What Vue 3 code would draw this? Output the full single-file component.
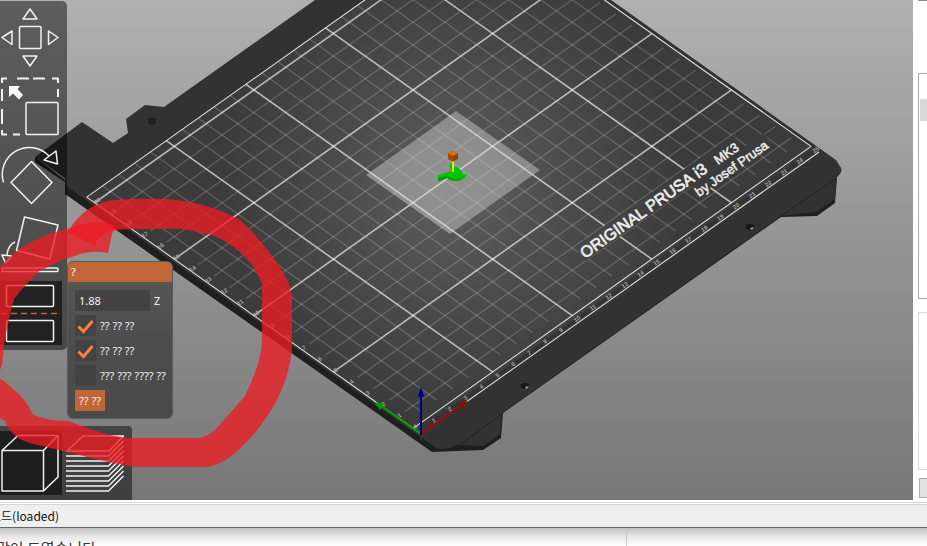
<script setup>
import { reactive, ref } from 'vue'

// Bed projection: 50 mm along each bed axis, measured from the bed origin.
const project = (u, v) => [421 + 79.6 * (u - v), 434 - 56.4 * (u + v)]
const segment = (u1, v1, u2, v2) => {
  const [x1, y1] = project(u1, v1)
  const [x2, y2] = project(u2, v2)
  return { x1, y1, x2, y2 }
}

const minor = []
const major = []
for (let k = 1; k < 25; k++) {
  if (k % 5) minor.push(segment(k / 5, 0.2, k / 5, 4.2))
  else major.push(segment(k / 5, 0.1, k / 5, 4.2))
}
for (let k = 1; k <= 20; k++) {
  if (k % 5) minor.push(segment(0.1, 0.1 + k / 5, 4.95, 0.1 + k / 5))
  else major.push(segment(0, 0.1 + k / 5, 5, 0.1 + k / 5))
}
const border = [
  segment(0, 0.1, 5, 0.1),
  segment(0, 0, 5, 0),
  segment(0, 0, 0, 4.2),
  segment(5, 0.1, 5, 4.2),
  segment(0, 4.2, 5, 4.2)
]

const ticks = []
for (let k = 1; k <= 25; k++) {
  const [x, y] = project(k / 5, 0.04)
  ticks.push({ id: 'x' + k, n: k, t: `translate(${x} ${y}) rotate(-35)` })
}
for (let k = 0; k <= 20; k++) {
  const [x, y] = project(0.03, 0.1 + k / 5)
  ticks.push({ id: 'y' + k, n: k, t: `translate(${x} ${y}) rotate(-35)` })
}

const layers = [456, 461, 466, 471, 476, 481, 486, 491]
const height = ref('1.88')
const options = reactive([
  { id: 'upper', label: '?? ?? ??', on: true },
  { id: 'lower', label: '?? ?? ??', on: true },
  { id: 'rotate', label: '??? ??? ???? ??', on: false }
])
</script>

<template>
  <div class="window">
    <main class="viewer">
      <svg class="scene" viewBox="0 0 913 500" preserveAspectRatio="xMinYMin slice">
        <defs>
          <radialGradient id="glow" gradientUnits="userSpaceOnUse" cx="453" cy="185" r="235">
            <stop offset="0" stop-color="#5f5f5f" />
            <stop offset=".5" stop-color="#4b4b4b" />
            <stop offset="1" stop-color="#3b3b3b" />
          </radialGradient>
          <mask id="print" maskUnits="userSpaceOnUse" x="0" y="-200" width="913" height="700">
            <rect x="0" y="-200" width="913" height="700" fill="#fff" />
            <g stroke="#000">
              <path d="M580 254L738 142" stroke-width="18" />
              <path d="M695 190L768 139" stroke-width="14" />
            </g>
          </mask>
        </defs>
        <path fill="#1f1f1f" d="M35 157L35 162L65 182L65 194L432 452L483 450L501 438L503 413L781 217L817 216L835 203L837 178L800 150L421 434L66 181Z" />
        <path fill="#323232" d="M315 0L164 107L145 105L126 119L128 133L113 143L82 122L35 157L65 178L66 186L436 448Q446 451 456 445L483 446L500 434L502 413L781 216L816 212L835 199L836 178Q843 172 841 168L836 160L611 0Z" />
        <path d="M454 449L503 413M781 216L837 178" stroke="#222" fill="none" />
        <path fill="url(#glow)" d="M421 434L819 152L605 0L367 0L87 197Z" />
        <path d="M420 440L819 157L813 149L421 428Z" fill="#343434" />
        <g mask="url(#print)" stroke="#fff" fill="none">
          <line v-for="(l, i) in minor" :key="'n' + i" v-bind="l" stroke-opacity=".17" stroke-width="1.4" />
          <line v-for="(l, i) in major" :key="'m' + i" v-bind="l" stroke-opacity=".64" stroke-width="1.6" />
        </g>
        <line v-for="(l, i) in border" :key="'b' + i" v-bind="l" stroke="#e2e2e2" stroke-width="1.1" />
        <text v-for="t in ticks" :key="t.id" class="tick" :transform="t.t" text-anchor="middle" dy="2">{{ t.n }}</text>
        <text class="brand large" transform="translate(585 259) rotate(-35.3)">ORIGINAL PRUSA i3</text>
        <text class="brand" transform="translate(718 165) rotate(-35.3)">MK3</text>
        <text class="brand" transform="translate(699 197) rotate(-35.3)">by Josef Prusa</text>

        <path d="M148 118h8v5l-2 2h-4l-2-2z" fill="#202020" />
        <g>
          <ellipse cx="750" cy="227" rx="4.5" ry="3" fill="#171717" />
          <path d="M750 228l4-1-1 2-2 1z" fill="#999" />
          <ellipse cx="525" cy="386" rx="4.5" ry="3" fill="#171717" />
          <path d="M525 387l4-1-1 2-2 1z" fill="#999" />
        </g>

        <path d="M456 111L540 170L450 234L366 175Z" fill="#d6d6d6" fill-opacity=".43" />
        <path d="M366 175L450 234L454 231L370 172Z" fill="#fff" fill-opacity=".05" />
        <path d="M438 175Q447 173 451 171L450 164Q451 162 453 166Q462 168 463 175Q466 175 467 173Q467 178 460 180Q452 182 447 178Q444 180 438 181Z" fill="#00c400" />
        <path d="M438 178Q448 174 453 179Q461 180 465 177Q461 181 455 181Q449 180 447 178Q443 181 438 181Z" fill="#009c00" />
        <path d="M453 161V172" stroke="#d9f000" stroke-width="2" />
        <path d="M453 151L458 153.500V159L453 161.500L448 159V153.500Z" fill="#8a3f00" />
        <path d="M453 151L458 153.500L453 156L448 153.500Z" fill="#df6d00" />
        <path d="M453 156V161.500L448 159V153.500Z" fill="#a34c00" />

        <g stroke-width="2" fill="none">
          <path d="M421 434L380 405" stroke="#00a000" />
          <path d="M421 434L462 405" stroke="#a00000" />
          <path d="M421 435V396" stroke="#000082" />
        </g>
        <path d="M374 402L380 410L384 404Z" fill="#00a000" />
        <path d="M468 401L459 403L463 408Z" fill="#a00000" />
        <path d="M421 387L424 396L421 398L418 396Z" fill="#000082" />
      </svg>

      <nav class="tools" aria-label="Object tools">
        <button type="button" class="tool" aria-label="Move">
          <svg viewBox="0 5 62 64"><path d="M30 9L37 19H23ZM30 66L37 56H23ZM2 37.500L12 31V44.500ZM58 37.500L48.500 31V44.500Z" /><rect x="19.500" y="26.500" width="21.500" height="22" rx="1" /></svg>
        </button>
        <button type="button" class="tool" aria-label="Scale">
          <svg viewBox="0 74 62 64"><path class="dash" d="M2 83V78.500H7M17 78.500H29M33 78.500H45M52 78.500H58V83M2 89V101M2 109V124M2 130V134.500H7M13 134.500H20M58 89V97" /><rect x="26" y="102.500" width="32" height="32" rx="1" /><path class="solid" d="M9 86H20L17.500 89L23 95L19 99.500L13 93.500L9 97Z" /></svg>
        </button>
        <button type="button" class="tool" aria-label="Rotate">
          <svg viewBox="0 143 62 64"><path d="M3.500 182.500A27 27 0 0 1 49 156M56 151L44 160L57.500 164ZM31.500 161.500L52 182.500L31.500 203.500L11 182.500Z" /></svg>
        </button>
        <button type="button" class="tool" aria-label="Place on face">
          <svg viewBox="0 212 62 64"><path d="M24.500 217L58 225L50 259L16.500 250.500ZM15 242Q8 245 7 255M2 255L12 256L5.500 263Z" /><rect x="2" y="268" width="56" height="3.500" rx="1" /></svg>
        </button>
        <button type="button" class="tool active" aria-label="Cut">
          <svg viewBox="0 281 62 64"><rect x="6.500" y="285.500" width="47" height="21" rx="1" /><rect x="6.500" y="320.500" width="47" height="21" rx="1" /><path class="cutline" d="M1 313.500H58" /></svg>
        </button>
      </nav>

      <form class="panel" @submit.prevent>
        <h1 class="title">?</h1>
        <div class="fields">
          <div class="row depth">
            <input id="cut-z" v-model="height" class="number" type="text" />
            <label for="cut-z">Z</label>
          </div>
          <div v-for="o in options" :key="o.id" class="row">
            <span class="tickbox">
              <input :id="o.id" v-model="o.on" type="checkbox" />
              <svg v-if="o.on" viewBox="0 0 21 21"><path d="M3.500 11.500L8.500 16.500L17.500 6" /></svg>
            </span>
            <label :for="o.id">{{ o.label }}</label>
          </div>
          <button type="submit" class="cut">?? ??</button>
        </div>
      </form>

      <nav class="views" aria-label="View">
        <button type="button" class="tool active" aria-label="Editor">
          <svg viewBox="0 431 62 64"><path d="M2 450.500H43.500V491H2ZM2 450.500L18 435.500H58V477L43.500 491M43.500 450.500L58 435.500" /></svg>
        </button>
        <button type="button" class="tool" aria-label="Preview">
          <svg viewBox="65 431 62 64"><path d="M67 451L83 436H123.500L109 451Z" /><path v-for="y in layers" :key="y" :d="`M66 ${y}H108.500L123.500 ${y - 15}`" /></svg>
        </button>
      </nav>

      <svg class="marker" viewBox="0 0 913 500" preserveAspectRatio="xMinYMin slice">
        <path d="M68 232Q75 218 90 208Q102 201 115 200Q140 198 165 199Q205 201 240 220Q265 243 283 272Q292 288 292 300V350Q289 376 277 400Q259 433 235 453Q220 466 205 467H135Q110 463 75 454L30 443Q12 438 5 421L0 418V379L3 380L14 390Q26 399 33 415L50 420L68 421L90 429Q113 437 128 438H200Q208 436 215 430L245 396Q257 370 259 360Q262 350 262 340V285Q257 266 235 248Q215 233 200 233Q185 228 165 229H130Q110 229 100 237Q97 240 95 246Z" />
        <path d="M0 267Q17 247 40 238Q55 231 68 229L82 224Q100 220 114 225L108 253Q95 250 80 254L60 261L38 272Q24 286 14 299L12 306Q7 326 4 345L2 365L0 370Z" />
      </svg>
    </main>

    <aside class="side">
      <div class="list"><div class="chosen"></div></div>
      <div class="group"></div>
      <button type="button" class="slice" aria-label="Slice now"></button>
    </aside>

    <footer class="status"><span>로드(loaded)</span></footer>
    <div class="below">
      <p>많이 드였습니다</p>
      <div class="column"></div>
    </div>
  </div>
</template>

<style>
body {
  margin: 0;
  background: #fff;
}
</style>

<style scoped>
* {
  box-sizing: border-box;
}
.window {
  display: grid;
  grid-template-columns: 1fr 14px;
  grid-template-rows: 1fr 28px 18px;
  height: 100vh;
  overflow: hidden;
  font-family: "Noto Sans", "Noto Sans CJK KR", sans-serif;
}
.viewer {
  position: relative;
  display: grid;
  grid-template-columns: 67px 1fr;
  grid-template-rows: 1fr auto;
  min-height: 0;
  overflow: hidden;
  background: linear-gradient(#b0b0b0, #777);
}
.scene,
.marker {
  position: absolute;
  inset: 0;
  width: 100%;
  height: 100%;
}
.marker {
  pointer-events: none;
  fill: #ed1c24;
  fill-opacity: .78;
}
.tick {
  font: bold 6px "Liberation Sans", sans-serif;
  fill: #a4a4a4;
}
.brand {
  font: 13px "Liberation Sans", sans-serif;
  fill: #ececec;
  stroke: #ececec;
  stroke-width: .5px;
}
.brand.large {
  font-size: 16px;
  stroke-width: .7px;
}
.tools,
.views {
  position: relative;
  display: flex;
  background: rgba(0, 0, 0, .47);
}
.tools {
  flex-direction: column;
  gap: 5px;
  align-self: start;
  margin-top: 1px;
  padding: 4px 5px 5px 0;
  border-radius: 0 5px 5px 0;
}
.views {
  grid-column: 1 / 3;
  justify-self: start;
  gap: 3px;
  padding: 5px 5px 5px 0;
  border-radius: 0 4px 0 0;
}
.tool {
  display: block;
  width: 62px;
  height: 64px;
  padding: 0;
  border: 0;
  background: transparent;
}
.tool.active {
  background: rgba(12, 12, 12, .66);
}
.tool svg {
  display: block;
  width: 100%;
  height: 100%;
  fill: none;
  stroke: #f2f2f2;
  stroke-width: 1.5px;
  stroke-linejoin: round;
}
.tool .dash {
  stroke-width: 2px;
}
.tool .solid {
  fill: #fff;
  stroke: none;
}
.tool .cutline {
  stroke: #b8663a;
  stroke-dasharray: 6 4;
}
.panel {
  position: relative;
  align-self: start;
  justify-self: start;
  margin-top: 261px;
  width: 106px;
  border: 1px solid #5a5b60;
  border-radius: 6px;
  overflow: hidden;
  background: linear-gradient(#585858, #4d4d4d 50%, #4a4a4a);
  color: #f2f2f2;
  font-size: 11px;
  line-height: 21px;
}
.title {
  margin: 0;
  padding: 0 3px;
  height: 20px;
  background: #c16737;
  font-size: 11px;
  font-weight: 400;
  line-height: 20px;
}
.fields {
  display: flex;
  flex-direction: column;
  align-items: flex-start;
  gap: 4px;
  padding: 8px 0 7px 7px;
}
.row {
  display: flex;
  gap: 4px;
  height: 21px;
  white-space: nowrap;
}
.number {
  width: 75px;
  height: 21px;
  padding: 0 4px;
  border: 0;
  background: #434343;
  color: inherit;
  font: inherit;
}
.tickbox {
  display: grid;
  width: 21px;
  height: 21px;
  background: #434343;
}
.tickbox input,
.tickbox svg {
  grid-area: 1 / 1;
  width: 21px;
  height: 21px;
  margin: 0;
}
.tickbox input {
  appearance: none;
}
.tickbox svg {
  pointer-events: none;
  fill: none;
  stroke: #ff7f3b;
  stroke-width: 3px;
}
.cut {
  height: 21px;
  padding: 0 4px;
  border: 0;
  background: #c16737;
  color: inherit;
  font: inherit;
}
.side {
  display: flex;
  flex-direction: column;
  padding: 73px 0 2px 5px;
  background: linear-gradient(#888, #888) 5px 0 / 9px 1px no-repeat #fff;
}
.list {
  flex: 226 1 226px;
  padding: 25px 0 0 1px;
  border: 1px solid #aaaaae;
  border-right: 0;
}
.chosen {
  height: 22px;
  background: #d9d9d9;
}
.group {
  flex: 158 1 158px;
  margin: 13px 0 8px;
  border: 1px solid #dcdcdc;
  border-right: 0;
}
.slice {
  height: 20px;
  margin-left: 1px;
  padding: 0;
  border: 1px solid #adadad;
  border-right: 0;
  background: #e1e1e1;
}
.status {
  grid-column: 1 / 3;
  margin-top: 2px;
  border-top: 1px solid #d7d7d7;
  border-bottom: 1px solid #666;
  background: linear-gradient(#fff 1px, #d5d5d5 1px, #d5d5d5 2px, #efefef 2px);
  overflow: hidden;
  color: #111;
  font-family: "Noto Sans CJK KR", sans-serif;
  font-size: 12px;
  line-height: 26px;
  white-space: nowrap;
}
.status span {
  margin-left: -10px;
}
.below {
  grid-column: 1 / 3;
  display: grid;
  grid-template-columns: 627px 1fr;
  overflow: hidden;
  background: linear-gradient(#c0c0c0, #e6e6e6 45%, #fff);
}
.below p {
  margin: 9px 0 0 -4px;
  color: #333;
  font-family: "Noto Sans CJK KR", sans-serif;
  font-size: 15px;
  line-height: 22px;
  white-space: nowrap;
}
.column {
  border-left: 1px solid #c8c8d0;
  margin-left: -1px;
}
</style>
